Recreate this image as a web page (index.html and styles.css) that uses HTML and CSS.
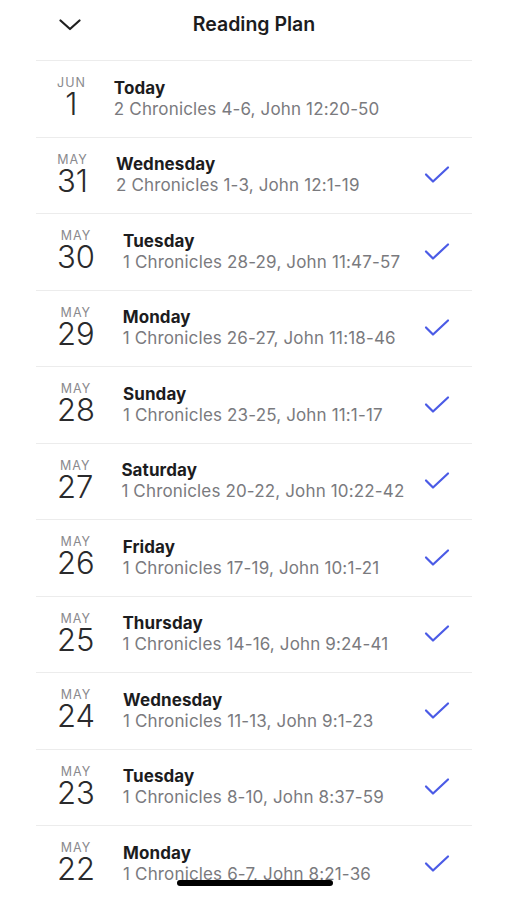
FILE: index.html
```html
<!DOCTYPE html>
<html lang="en">
<head>
    <meta charset="UTF-8">
    <meta name="viewport" content="width=device-width, initial-scale=1.0">
    <title>Reading Plan</title>
    <link rel="stylesheet" href="styles.css">
</head>
<body>
    <div class="sheet">
        <div class="header">
            <button class="close-btn" aria-label="Close">
                <svg width="22" height="12" viewBox="0 0 22 12"><path d="M1.5 1.5 L11 10 L20.5 1.5" fill="none" stroke="#1f1f1f" stroke-width="2.2" stroke-linecap="round" stroke-linejoin="round"/></svg>
            </button>
            <h1 class="title">Reading Plan</h1>
        </div>

        <ul class="plan-list" id="plan-list"></ul>
    </div>

    <div class="home-indicator"></div>

    <script>
        const days = [
            { month: "JUN", day: 1, name: "Today", passage: "2 Chronicles 4-6, John 12:20-50", done: false },
            { month: "MAY", day: 31, name: "Wednesday", passage: "2 Chronicles 1-3, John 12:1-19", done: true },
            { month: "MAY", day: 30, name: "Tuesday", passage: "1 Chronicles 28-29, John 11:47-57", done: true },
            { month: "MAY", day: 29, name: "Monday", passage: "1 Chronicles 26-27, John 11:18-46", done: true },
            { month: "MAY", day: 28, name: "Sunday", passage: "1 Chronicles 23-25, John 11:1-17", done: true },
            { month: "MAY", day: 27, name: "Saturday", passage: "1 Chronicles 20-22, John 10:22-42", done: true },
            { month: "MAY", day: 26, name: "Friday", passage: "1 Chronicles 17-19, John 10:1-21", done: true },
            { month: "MAY", day: 25, name: "Thursday", passage: "1 Chronicles 14-16, John 9:24-41", done: true },
            { month: "MAY", day: 24, name: "Wednesday", passage: "1 Chronicles 11-13, John 9:1-23", done: true },
            { month: "MAY", day: 23, name: "Tuesday", passage: "1 Chronicles 8-10, John 8:37-59", done: true },
            { month: "MAY", day: 22, name: "Monday", passage: "1 Chronicles 6-7, John 8:21-36", done: true }
        ];

        const checkIcon = `<svg class="check" width="26" height="20" viewBox="0 0 26 20"><path d="M2 9.5 L9 16.5 L24 2.5" fill="none" stroke="#4b5be6" stroke-width="2.2" stroke-linecap="round" stroke-linejoin="round"/></svg>`;

        const list = document.getElementById("plan-list");

        days.forEach(item => {
            const li = document.createElement("li");
            li.className = "plan-item";
            li.innerHTML = `
                <div class="date">
                    <span class="month">${item.month}</span>
                    <span class="day">${item.day}</span>
                </div>
                <div class="info">
                    <div class="day-name">${item.name}</div>
                    <div class="passage">${item.passage}</div>
                </div>
                ${item.done ? checkIcon : ""}
            `;
            list.appendChild(li);
        });
    </script>
</body>
</html>
```

FILE: styles.css
```css
* {
    margin: 0;
    padding: 0;
    box-sizing: border-box;
}

body {
    background: #fff;
    color: #1c1c1e;
    font-family: 'Inter', 'Roboto', sans-serif;
    overflow: hidden;
}

.sheet {
    margin: 0 35px 0 36px;
}

.header {
    position: relative;
    height: 61px;
    border-bottom: 1px solid #ececec;
    display: flex;
    align-items: center;
    justify-content: center;
    padding-bottom: 12px;
}

.close-btn {
    position: absolute;
    left: 23px;
    top: 19px;
    border: none;
    background: none;
    display: flex;
}

.title {
    font-size: 19.5px;
    font-weight: 600;
    color: #1c1c1e;
}

.plan-list {
    list-style: none;
}

.plan-item {
    height: 76.5px;
    display: flex;
    align-items: center;
    gap: 28px;
    padding: 0 22px 0 21px;
    border-bottom: 1px solid #ececec;
}

.date {
    display: flex;
    flex-direction: column;
    align-items: center;
    gap: 4px;
    margin-top: -4px;
}

.month {
    font-size: 12.5px;
    letter-spacing: 1px;
    color: #8a8a8e;
    line-height: 11px;
}

.day {
    font-size: 31px;
    font-weight: 300;
    line-height: 24px;
    color: #2a2a2c;
}

.info {
    flex: 1;
    min-width: 0;
    margin-top: -1px;
}

.day-name {
    font-size: 17px;
    font-weight: 700;
    letter-spacing: 0.1px;
    line-height: 22px;
    color: #1c1c1e;
}

.passage {
    font-size: 17px;
    letter-spacing: 0.15px;
    line-height: 21px;
    white-space: nowrap;
    color: #7a7a7e;
}

.check {
    flex-shrink: 0;
}

.home-indicator {
    position: fixed;
    left: 177px;
    bottom: 14px;
    width: 156px;
    height: 6px;
    border-radius: 3px;
    background: #000;
}
```
